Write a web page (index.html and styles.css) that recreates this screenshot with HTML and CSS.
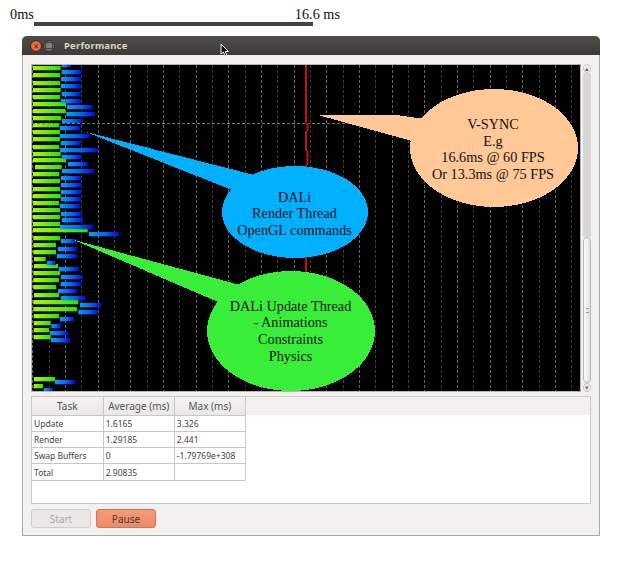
FILE: index.html
```html
<!DOCTYPE html>
<html lang="en">

<head>
    <meta charset="UTF-8">
    <title>Performance</title>
    <link rel="stylesheet" href="styles.css">
</head>

<body>

    <div class="ruler">
        <div class="ruler-labels">
            <span>0ms</span>
            <span>16.6 ms</span>
        </div>
        <div class="ruler-bar"></div>
    </div>

    <div class="window">
        <div class="titlebar">
            <span class="win-btn win-close">&times;</span>
            <span class="win-btn win-min"></span>
            <span class="win-title">Performance</span>
            <svg class="cursor" width="10" height="15" viewBox="0 0 10 15">
                <path d="M1 1 L1 11 L3.4 9 L5 13 L6.8 12.2 L5.2 8.6 L8.4 8.4 Z" fill="#111" stroke="#eee" stroke-width="1" />
            </svg>
        </div>

        <div class="content">
            <div class="top-row">
                <div class="chart">
                    <svg id="plot" width="548" height="326" viewBox="32 65 548 326">
                        <defs>
                            <linearGradient id="greenBar">
                                <stop offset="0" stop-color="#a8fa00" />
                                <stop offset="1" stop-color="#28e400" />
                            </linearGradient>
                            <linearGradient id="blueBar">
                                <stop offset="0" stop-color="#00a4ff" />
                                <stop offset="0.55" stop-color="#0064f4" />
                                <stop offset="1" stop-color="#0008d8" />
                            </linearGradient>
                        </defs>
                        <g id="grid"></g>
                        <g id="bars"></g>
                        <path d="M32 123.5 H420" stroke="#777" stroke-dasharray="3 2" />
                        <path d="M306 65 V123 M307.5 123 V131 M306 131 V151 M307.5 151 V165 M306 165 V300" stroke="#cc1010" stroke-width="2" fill="none" />

                        <g class="callout peach">
                            <polygon points="318,115 396,115 432,120 412,141" />
                            <ellipse cx="494" cy="148" rx="84" ry="59" />
                        </g>
                        <g class="callout blue">
                            <polygon points="86,132 258,176 232,190" />
                            <ellipse cx="295" cy="212" rx="73" ry="46" />
                        </g>
                        <g class="callout green">
                            <polygon points="74,240 240,285 218,302" />
                            <ellipse cx="291" cy="331" rx="84" ry="60" />
                        </g>

                        <text class="note" x="493" y="129">V-SYNC</text>
                        <text class="note" x="493" y="146">E.g</text>
                        <text class="note" x="493" y="162">16.6ms @ 60 FPS</text>
                        <text class="note" x="493" y="179">Or 13.3ms @ 75 FPS</text>

                        <text class="note" x="294.5" y="202">DALi</text>
                        <text class="note" x="294.5" y="218">Render Thread</text>
                        <text class="note" x="294.5" y="235">OpenGL commands</text>

                        <text class="note" x="290.5" y="311">DALi Update Thread</text>
                        <text class="note" x="290.5" y="327">- Animations</text>
                        <text class="note" x="290.5" y="344">Constraints</text>
                        <text class="note" x="290.5" y="361">Physics</text>
                    </svg>
                </div>

                <div class="scrollbar">
                    <div class="scroll-arrow">&#9652;</div>
                    <div class="scroll-trough"></div>
                    <div class="scroll-thumb"><span class="grip"></span></div>
                    <div class="scroll-arrow">&#9662;</div>
                </div>
            </div>

            <div class="table-panel">
                <table class="stats">
                    <thead>
                        <tr>
                            <th>Task</th>
                            <th>Average (ms)</th>
                            <th>Max (ms)</th>
                        </tr>
                    </thead>
                    <tbody>
                        <tr>
                            <td>Update</td>
                            <td>1.6165</td>
                            <td>3.326</td>
                        </tr>
                        <tr>
                            <td>Render</td>
                            <td>1.29185</td>
                            <td>2.441</td>
                        </tr>
                        <tr>
                            <td>Swap Buffers</td>
                            <td>0</td>
                            <td>-1.79769e+308</td>
                        </tr>
                        <tr>
                            <td>Total</td>
                            <td>2.90835</td>
                            <td></td>
                        </tr>
                    </tbody>
                </table>
            </div>

            <div class="buttons">
                <button class="btn btn-off">Start</button>
                <button class="btn btn-on">Pause</button>
            </div>
        </div>
    </div>

    <script>
        var NS = "http://www.w3.org/2000/svg";

        // y, start x, end x (page pixels)
        var greenBars = [
            [68.3, 33, 60.7], [75.3, 33, 60], [82.7, 33, 60], [90, 33, 60.7], [97, 33, 60], [103.7, 33, 66],
            [110.7, 33, 65.3], [117.7, 33, 61.3], [125, 33, 59.3], [132, 33, 60], [139.3, 33, 60], [146.7, 33, 59.3],
            [153.7, 33, 60.7], [160.3, 33, 66], [167.3, 35, 61.7], [174.3, 33, 59.3], [181.3, 33, 60], [188.7, 33, 60],
            [196, 33, 60.7], [203.3, 33, 59], [210.3, 33, 60], [216.7, 33, 60], [223.7, 33, 60], [230, 33, 87.7],
            [238, 33.3, 60], [245, 33.3, 56], [252.3, 33.3, 56], [259.3, 34, 45.7], [266.3, 34, 58], [273.3, 33.3, 60],
            [280.3, 33.3, 59], [287.3, 33.3, 56], [294.7, 34, 59], [301.7, 33.3, 78.3], [308.7, 33.3, 77], [316, 33.7, 59],
            [322.7, 33.7, 50.7], [329.7, 33.7, 49], [337, 33.7, 50.7], [378.7, 34, 55], [386, 33.7, 43]
        ];
        var blueBars = [
            [65.3, 61.7, 71], [72, 61.7, 81.7], [79.3, 61, 81], [86.3, 61, 81], [93.7, 61.7, 81], [100.7, 61, 81],
            [107.3, 67, 92.7], [114, 66.3, 95], [121.3, 62, 83], [128.3, 60, 80], [135.7, 60, 90], [143, 61, 81],
            [150, 60, 98.3], [157.3, 62, 81.7], [163.7, 68, 87.7], [171, 62, 94], [178, 61, 81], [185.3, 61, 81.7],
            [192.3, 61, 81], [199.3, 61, 81], [206.3, 60, 80], [213.7, 61, 81.7], [220, 62, 83.3], [227.3, 60, 93.3],
            [234.3, 89, 119], [241.3, 61, 77], [248.7, 58, 77], [255.7, 57, 77], [263, 46.7, 55.7], [269.3, 58.7, 79],
            [276.7, 61, 83], [283.7, 60.7, 81], [291, 58, 77], [298, 61, 85], [305, 80, 101], [312.3, 78.3, 98.3],
            [319.3, 60, 74], [326, 51.3, 61], [333, 50, 68], [340.3, 51, 70], [382.3, 55, 75], [389.7, 43.7, 53]
        ];

        function addRect(parent, x, y, w, h, fill, opacity) {
            var r = document.createElementNS(NS, "rect");
            r.setAttribute("x", x);
            r.setAttribute("y", y);
            r.setAttribute("width", w);
            r.setAttribute("height", h);
            r.setAttribute("fill", fill);
            if (opacity) {
                r.setAttribute("opacity", opacity);
            }
            parent.appendChild(r);
        }

        function drawBars(list, fill) {
            var g = document.getElementById("bars");
            list.forEach(function (b) {
                var y = Math.round(b[0]) - 2;
                addRect(g, b[1], y, b[2] - b[1], 4, fill);
                addRect(g, b[1], y + 4, b[2] - b[1], 1, fill, 0.3);
            });
        }

        // dashed grid lines, one every 16.33px
        var grid = document.getElementById("grid");
        for (var i = 0; i < 34; i++) {
            var line = document.createElementNS(NS, "path");
            var x = Math.round(32.3 + i * 16.33) + 0.5;
            line.setAttribute("d", "M" + x + " 65 V391");
            line.setAttribute("stroke", i % 2 ? "#3e3e3e" : "#6a6a6a");
            line.setAttribute("stroke-dasharray", "3 2");
            grid.appendChild(line);
        }

        drawBars(greenBars, "url(#greenBar)");
        drawBars(blueBars, "url(#blueBar)");
    </script>

</body>

</html>
```

FILE: styles.css
```css
* {
    margin: 0;
    padding: 0;
    box-sizing: border-box;
}

body {
    background: #fff;
    font-family: "Liberation Serif", serif;
    color: #111;
}

.ruler {
    height: 36px;
    padding: 6px 0 0 10px;
}

.ruler-labels {
    display: flex;
    justify-content: space-between;
    width: 330px;
    height: 16px;
    font-size: 14.25px;
    line-height: 16px;
}

.ruler-bar {
    width: 279px;
    height: 4px;
    margin-left: 24px;
    background: #444;
}

.window {
    width: 578px;
    height: 500px;
    border: 1px solid #a8a8a4;
    border-top: 0;
    background: #f2f1ef;
    font-family: "Noto Sans", sans-serif;
    margin-left: 22px;
    border-radius: 5px 5px 0 0;
}

.titlebar {
    position: relative;
    display: flex;
    align-items: center;
    height: 19px;
    margin: 0 -1px;
    padding-left: 8px;
    background: linear-gradient(#4e4d48, #3c3b37);
    border-radius: 5px 5px 0 0;
}

.win-btn {
    display: flex;
    align-items: center;
    justify-content: center;
    width: 12px;
    height: 12px;
    border-radius: 50%;
    margin-right: 1px;
}

.win-close {
    font-size: 10px;
    line-height: 10px;
    font-weight: 700;
    color: #7a2e14;
    background: radial-gradient(#f28a5a, #dc5228);
    border: 1px solid #3a2a20;
}

.win-min {
    background: radial-gradient(#8d8c86, #5f5e59);
    border: 1px solid #35342f;
}

.win-min::after {
    content: "";
    width: 6px;
    height: 5px;
    border: 1px solid #45443f;
}

.win-title {
    margin-left: 8px;
    font-size: 9.5px;
    font-weight: 700;
    color: #d8d4ca;
    letter-spacing: 0.2px;
}

.cursor {
    position: absolute;
    left: 198px;
    top: 7px;
}

.content {
    padding: 9px 8px 0 8px;
}

.top-row {
    display: flex;
    height: 328px;
}

.chart {
    width: 550px;
    height: 328px;
    border: 1px solid #b5b4b0;
    background: #000;
    line-height: 0;
}

.callout {
    shape-rendering: crispEdges;
}

.peach {
    fill: #ffc896;
}

.blue {
    fill: #00b0ff;
}

.green {
    fill: #38ee38;
}

.note {
    font-family: "Liberation Serif", serif;
    font-size: 14.25px;
    text-anchor: middle;
    fill: #111;
}

.scrollbar {
    display: flex;
    flex-direction: column;
    width: 9px;
    height: 328px;
    margin-left: 2px;
}

.scroll-arrow {
    height: 9px;
    font-size: 7px;
    line-height: 8px;
    text-align: center;
    color: #666;
    background: #f5f4f2;
    border: 1px solid #c4c3bf;
    border-radius: 4px;
}

.scroll-trough {
    height: 164px;
    background: #d9d7d3;
}

.scroll-thumb {
    display: flex;
    align-items: center;
    justify-content: center;
    height: 146px;
    background: linear-gradient(to right, #fafaf9, #e2e1de);
    border: 1px solid #b8b7b3;
    border-radius: 4px;
}

.grip {
    width: 3px;
    height: 5px;
    border-top: 1px solid #999;
    border-bottom: 1px solid #999;
}

.table-panel {
    height: 108px;
    margin-top: 4px;
    background: linear-gradient(#f2f1ef 18px, #fff 18px);
    border: 1px solid #c8c7c3;
}

.stats {
    border-collapse: collapse;
    table-layout: fixed;
    width: 214px;
    font-size: 8.5px;
    color: #444;
}

.stats th {
    height: 18px;
    font-size: 10px;
    font-weight: 400;
    color: #555;
    background: linear-gradient(#f4f3f1, #e9e8e5);
    border-right: 1px solid #c8c7c3;
    border-bottom: 1px solid #c8c7c3;
}

.stats td {
    height: 16.3px;
    padding: 0 2px;
    background: #fff;
    border-right: 1px solid #c8c7c3;
    border-bottom: 1px solid #c8c7c3;
}

.buttons {
    display: flex;
    gap: 5px;
    margin-top: 5px;
}

.btn {
    width: 60px;
    height: 19px;
    font-family: "Noto Sans", sans-serif;
    font-size: 10px;
    border-radius: 3px;
}

.btn-off {
    color: #a9a8a4;
    background: #e9e8e6;
    border: 1px solid #cfcecb;
}

.btn-on {
    color: #4c3a30;
    background: linear-gradient(#f69a78, #ee8a66);
    border: 1px solid #c4785c;
}
```
